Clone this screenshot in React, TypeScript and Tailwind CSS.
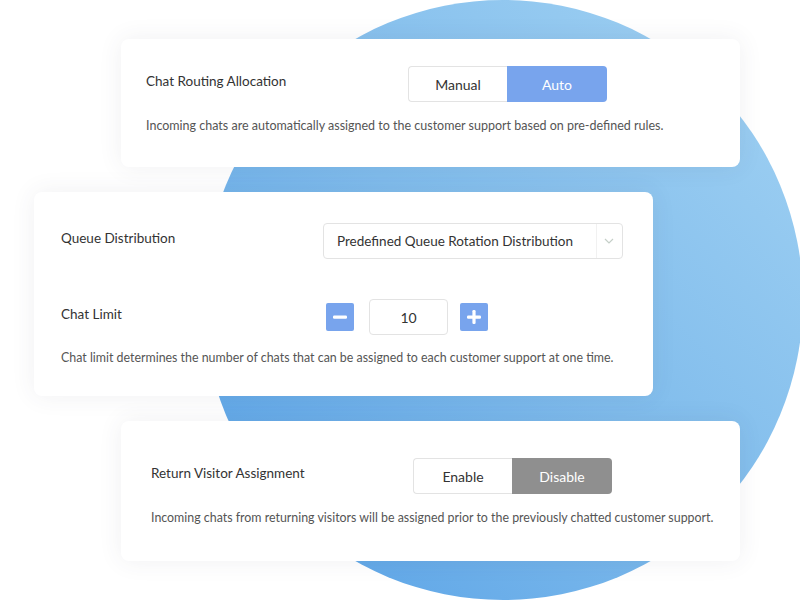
import React from 'react';

const font = { fontFamily: 'Lato, "Noto Sans", sans-serif' };

const Segmented: React.FC<{ left: string; right: string; activeClass: string }> = ({ left, right, activeClass }) => (
  <div className="flex h-[36px] w-[199px] text-[14px]">
    <div className="flex w-[99px] items-center justify-center rounded-l-[4px] border border-r-0 border-[#e3e3e3] bg-white text-[#333]">
      {left}
    </div>
    <div className={`flex w-[100px] items-center justify-center rounded-r-[4px] text-white ${activeClass}`}>{right}</div>
  </div>
);

const StepButton: React.FC<{ plus?: boolean }> = ({ plus }) => (
  <div className="flex h-[28px] w-[28px] items-center justify-center rounded-[2px] bg-[#78a4ed]">
    <svg width="18" height="18" viewBox="0 0 18 18">
      <rect x="2" y="7.5" width="14" height="3.2" rx="1.2" fill="#fff" />
      {plus && <rect x="7.4" y="2" width="3.2" height="14" rx="1.2" fill="#fff" />}
    </svg>
  </div>
);

export default function App() {
  return (
    <div className="relative h-[600px] w-[800px] overflow-hidden bg-white" style={font}>
      {/* decorative circle */}
      <div className="absolute left-[203px] top-[0px] h-[600px] w-[600px] rounded-full bg-gradient-to-bl from-[#a3d3f3] via-[#80bcec] to-[#55a0e6]" />

      <div className="relative flex flex-col gap-[25px] pt-[39px]">
        {/* Card 1 */}
        <div className="ml-[121px] h-[128px] w-[619px] rounded-[8px] bg-white pl-[25px] pt-[27px] shadow-[0_0_24px_rgba(60,70,90,0.08)]">
          <div className="flex items-center">
            <div className="w-[262px] pb-[6px] text-[13.5px] text-[#333]">Chat Routing Allocation</div>
            <Segmented left="Manual" right="Auto" activeClass="bg-[#78a4ed]" />
          </div>
          <p className="mt-[15px] text-[12.5px] leading-[18px] text-[#555]">
            Incoming chats are automatically assigned to the customer support based on pre-defined rules.
          </p>
        </div>

        {/* Card 2 */}
        <div className="ml-[34px] h-[204px] w-[619px] rounded-[8px] bg-white pl-[27px] pt-[31px] shadow-[0_0_24px_rgba(60,70,90,0.08)]">
          <div className="flex items-center">
            <div className="w-[262px] pb-[6px] text-[13.5px] text-[#333]">Queue Distribution</div>
            <div className="flex h-[36px] w-[300px] items-center rounded-[4px] border border-[#e3e3e3] bg-white text-[13.5px] text-[#333]">
              <div className="flex-1 pl-[13px]">Predefined Queue Rotation Distribution</div>
              <div className="flex h-full w-[26px] items-center justify-center border-l border-[#f1f1f1]">
                <svg width="10" height="6" viewBox="0 0 10 6" className="ml-[-2px]">
                  <path d="M1 1l4 4 4-4" fill="none" stroke="#c5cfc8" strokeWidth="1.2" />
                </svg>
              </div>
            </div>
          </div>
          <div className="mt-[40px] flex items-center">
            <div className="w-[265px] pb-[6px] text-[13.5px] text-[#333]">Chat Limit</div>
            <StepButton />
            <div className="ml-[15px] flex h-[36px] w-[79px] items-center justify-center rounded-[4px] border border-[#e3e3e3] text-[14px] text-[#333]">
              10
            </div>
            <div className="ml-[12px]">
              <StepButton plus />
            </div>
          </div>
          <p className="mt-[14px] text-[12.4px] leading-[18px] text-[#555]">
            Chat limit determines the number of chats that can be assigned to each customer support at one time.
          </p>
        </div>

        {/* Card 3 */}
        <div className="ml-[121px] h-[140px] w-[619px] rounded-[8px] bg-white pl-[30px] pt-[37px] shadow-[0_0_24px_rgba(60,70,90,0.08)]">
          <div className="flex items-center">
            <div className="w-[262px] pb-[6px] text-[13.5px] text-[#333]">Return Visitor Assignment</div>
            <Segmented left="Enable" right="Disable" activeClass="bg-[#8f8f8f]" />
          </div>
          <p className="mt-[15px] text-[12.4px] leading-[18px] text-[#555]">
            Incoming chats from returning visitors will be assigned prior to the previously chatted customer support.
          </p>
        </div>
      </div>
    </div>
  );
}
